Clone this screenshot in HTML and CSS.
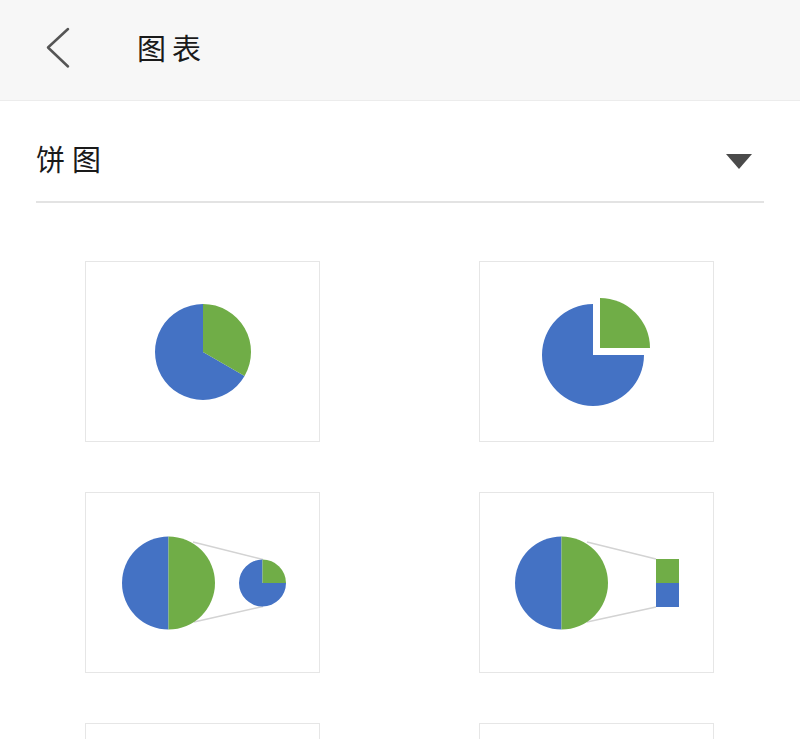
FILE: index.html
```html
<!DOCTYPE html>
<html lang="zh">
<head>
<meta charset="UTF-8">
<meta name="viewport" content="width=device-width, initial-scale=1.0">
<title>图表</title>
<link rel="stylesheet" href="styles.css">
</head>
<body>
  <header class="top-bar">
    <svg class="back-icon" width="28" height="44" viewBox="0 0 28 44">
      <polyline points="24,3 4,21.5 24,40.5" fill="none" stroke="#555" stroke-width="2.5" stroke-linecap="round" stroke-linejoin="round"/>
    </svg>
    <h1 class="title">图表</h1>
  </header>

  <div class="type-select">
    <span class="type-name">饼图</span>
    <svg class="caret" width="26" height="15" viewBox="0 0 26 15">
      <polygon points="0,0 26,0 13,15" fill="#4a4a4a"/>
    </svg>
  </div>

  <div class="chart-grid">
    <!-- plain pie -->
    <div class="chart-card">
      <svg viewBox="0 0 233 179" width="233" height="179">
        <path d="M117,90 L158.57,114 A48,48 0 1 1 117,42 Z" fill="#4472c4"/>
        <path d="M117,90 L117,42 A48,48 0 0 1 158.57,114 Z" fill="#70ad47"/>
      </svg>
    </div>

    <!-- exploded pie -->
    <div class="chart-card">
      <svg viewBox="0 0 233 179" width="233" height="179">
        <path d="M113,93 L164,93 A51,51 0 1 1 113,42 Z" fill="#4472c4"/>
        <path d="M120,86 L120,36 A50,50 0 0 1 170,86 Z" fill="#70ad47"/>
      </svg>
    </div>

    <!-- pie of pie -->
    <div class="chart-card">
      <svg viewBox="0 0 233 179" width="233" height="179">
        <line x1="107" y1="49" x2="177" y2="66.5" stroke="#d3d3d3" stroke-width="1.5"/>
        <line x1="108" y1="129" x2="177" y2="113.5" stroke="#d3d3d3" stroke-width="1.5"/>
        <path d="M82.5,43.5 A46.5,46.5 0 0 0 82.5,136.5 Z" fill="#4472c4"/>
        <path d="M82.5,43.5 A46.5,46.5 0 0 1 82.5,136.5 Z" fill="#70ad47"/>
        <path d="M176.5,90 L200,90 A23.5,23.5 0 1 1 176.5,66.5 Z" fill="#4472c4"/>
        <path d="M176.5,90 L176.5,66.5 A23.5,23.5 0 0 1 200,90 Z" fill="#70ad47"/>
      </svg>
    </div>

    <!-- bar of pie -->
    <div class="chart-card">
      <svg viewBox="0 0 233 179" width="233" height="179">
        <line x1="107" y1="49" x2="176" y2="66" stroke="#d3d3d3" stroke-width="1.5"/>
        <line x1="107" y1="129" x2="176" y2="114" stroke="#d3d3d3" stroke-width="1.5"/>
        <path d="M81.5,43.5 A46.5,46.5 0 0 0 81.5,136.5 Z" fill="#4472c4"/>
        <path d="M81.5,43.5 A46.5,46.5 0 0 1 81.5,136.5 Z" fill="#70ad47"/>
        <rect x="176" y="66" width="23" height="24" fill="#70ad47"/>
        <rect x="176" y="90" width="23" height="24" fill="#4472c4"/>
      </svg>
    </div>

    <!-- next row, cut off by the window -->
    <div class="chart-card"></div>
    <div class="chart-card"></div>
  </div>
</body>
</html>
```

FILE: styles.css
```css
body {
  margin: 0;
  padding: 0;
  background-color: #fff;
  font-family: "Noto Sans CJK SC", "Noto Sans", sans-serif;
  color: #1a1a1a;
}

.top-bar {
  box-sizing: border-box;
  height: 101px;
  padding: 26px 0 0 44px;
  display: flex;
  align-items: flex-start;
  background-color: #f7f7f7;
  border-bottom: 1px solid #ececec;
}

.back-icon {
  display: block;
}

.title {
  margin: 7px 0 0 65px;
  font-size: 29px;
  line-height: 29px;
  font-weight: 400;
  letter-spacing: 6px;
}

.type-select {
  margin: 0 36px;
  padding: 43px 12px 28px 0;
  display: flex;
  justify-content: space-between;
  align-items: flex-start;
  border-bottom: 2px solid #e3e3e3;
}

.type-name {
  font-size: 29px;
  line-height: 29px;
  letter-spacing: 7px;
}

.caret {
  display: block;
  margin-top: 10px;
}

.chart-grid {
  padding: 58px 0 0 85px;
  display: grid;
  grid-template-columns: 235px 235px;
  column-gap: 159px;
  row-gap: 50px;
}

.chart-card {
  box-sizing: border-box;
  width: 235px;
  height: 181px;
  border: 1px solid #e6e6e6;
  background-color: #fff;
}

.chart-card svg {
  display: block;
}
```
